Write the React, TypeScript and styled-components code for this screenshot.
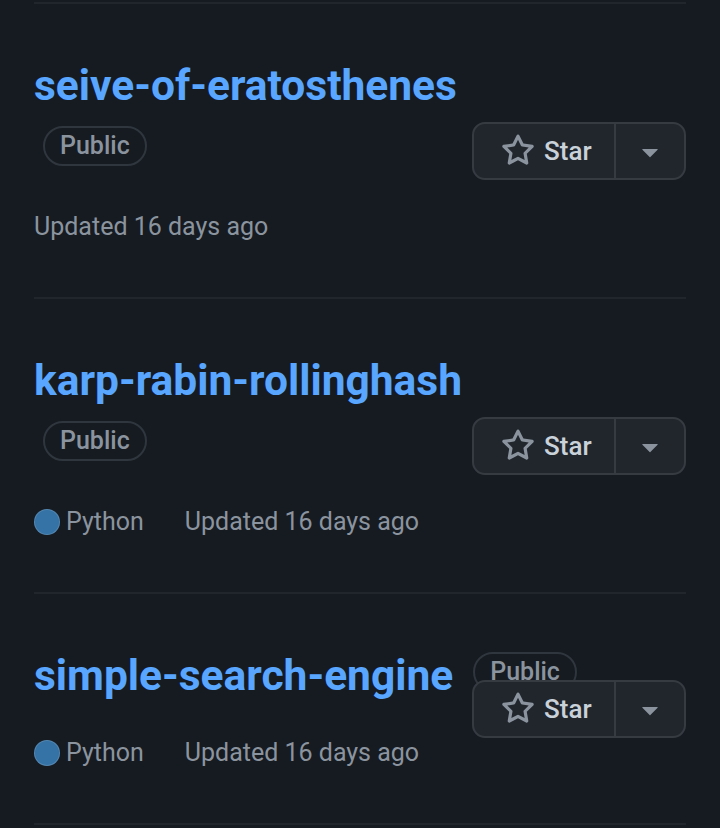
import React from "react";
import styled, { createGlobalStyle } from "styled-components";

const repos = [
  { name: "seive-of-eratosthenes", language: null, updated: "Updated 16 days ago" },
  { name: "karp-rabin-rollinghash", language: "Python", updated: "Updated 16 days ago" },
  { name: "simple-search-engine", language: "Python", updated: "Updated 16 days ago" },
];

export default function App() {
  return (
    <>
      <GlobalStyle />
      <List>
        {repos.map((repo) => (
          <Item key={repo.name}>
            <Info>
              <TitleRow>
                <Title>
                  <RepoLink href="#">{repo.name}</RepoLink>
                </Title>
                <Badge>Public</Badge>
              </TitleRow>
              <Meta>
                {repo.language && (
                  <Language>
                    <Dot />
                    {repo.language}
                  </Language>
                )}
                <span>{repo.updated}</span>
              </Meta>
            </Info>
            <Side>
              <StarGroup>
                <StarButton>
                  <StarIcon />
                  Star
                </StarButton>
                <CaretButton>
                  <CaretIcon />
                </CaretButton>
              </StarGroup>
            </Side>
          </Item>
        ))}
      </List>
    </>
  );
}

function StarIcon() {
  return (
    <svg width="34" height="34" viewBox="0 0 16 16" fill="#8b949e">
      <path d="M8 .25a.75.75 0 0 1 .673.418l1.882 3.815 4.21.612a.75.75 0 0 1 .416 1.279l-3.046 2.97.719 4.192a.751.751 0 0 1-1.088.791L8 12.347l-3.766 1.98a.75.75 0 0 1-1.088-.79l.72-4.194L.818 6.374a.75.75 0 0 1 .416-1.28l4.21-.611L7.327.668A.75.75 0 0 1 8 .25Zm0 2.445L6.615 5.5a.75.75 0 0 1-.564.41l-3.097.45 2.24 2.184a.75.75 0 0 1 .216.664l-.528 3.084 2.769-1.456a.75.75 0 0 1 .698 0l2.77 1.456-.53-3.084a.75.75 0 0 1 .216-.664l2.24-2.183-3.096-.45a.75.75 0 0 1-.564-.41L8 2.694Z" />
    </svg>
  );
}

function CaretIcon() {
  return (
    <svg width="34" height="34" viewBox="0 0 16 16" fill="#8b949e">
      <path d="m4.427 7.427 3.396 3.396a.25.25 0 0 0 .354 0l3.396-3.396A.25.25 0 0 0 11.396 7H4.604a.25.25 0 0 0-.177.427Z" />
    </svg>
  );
}

//*Styles

const GlobalStyle = createGlobalStyle`
  html, body {
    margin: 0;
    background: #161b22;
    font-family: Roboto, "Liberation Sans", sans-serif;
    color: #c9d1d9;
  }
`;

const List = styled.ul`
  list-style: none;
  margin: 0;
  padding: 2px 34px 0;
`;

const Item = styled.li`
  display: flex;
  border-top: 2px solid #21262d;
  padding: 50px 0 50px;
  &:last-child {
    border-bottom: 2px solid #21262d;
  }
`;

const Info = styled.div`
  width: 544px;
  flex-shrink: 0;
`;

const Side = styled.div`
  flex: 1;
  min-width: 0;
  display: flex;
  flex-direction: column;
  justify-content: space-around;
  align-items: flex-end;
`;

const TitleRow = styled.div`
  display: flex;
  flex-wrap: wrap;
  align-items: center;
`;

const Title = styled.h3`
  margin: 0 11px 0 0;
  font-size: 42.5px;
  font-weight: 700;
  line-height: 64px;
`;

const RepoLink = styled.a`
  color: #58a6ff;
  text-decoration: none;
`;

const Badge = styled.span`
  margin: 8px 0 16px 9px;
  padding: 0 15px;
  border: 2px solid #30363d;
  border-radius: 40px;
  color: #8b949e;
  font-size: 25px;
  font-weight: 500;
  line-height: 36px;
`;

const Meta = styled.div`
  display: flex;
  align-items: center;
  gap: 41px;
  margin-top: 25px;
  color: #8b949e;
  font-size: 25px;
  line-height: 40px;
`;

const Language = styled.span`
  display: inline-flex;
  align-items: center;
  gap: 6px;
`;

const Dot = styled.span`
  width: 24px;
  height: 24px;
  border-radius: 50%;
  background: #3572a5;
  border: 1px solid rgba(255, 255, 255, 0.15);
`;

const StarGroup = styled.div`
  display: flex;
  flex-shrink: 0;
  width: 214px;
  height: 58px;
  border: 2px solid #363b42;
  border-radius: 13px;
  background: #21262d;
  box-sizing: border-box;
`;

const StarButton = styled.button`
  display: flex;
  align-items: center;
  gap: 9px;
  width: 142px;
  flex-shrink: 0;
  padding: 0 0 0 27px;
  border: none;
  border-right: 2px solid #363b42;
  background: transparent;
  color: #c9d1d9;
  font-family: Roboto, "Liberation Sans", sans-serif;
  font-size: 26px;
  font-weight: 500;
`;

const CaretButton = styled.button`
  display: flex;
  align-items: center;
  justify-content: center;
  flex: 1;
  padding: 0;
  border: none;
  background: transparent;
`;
